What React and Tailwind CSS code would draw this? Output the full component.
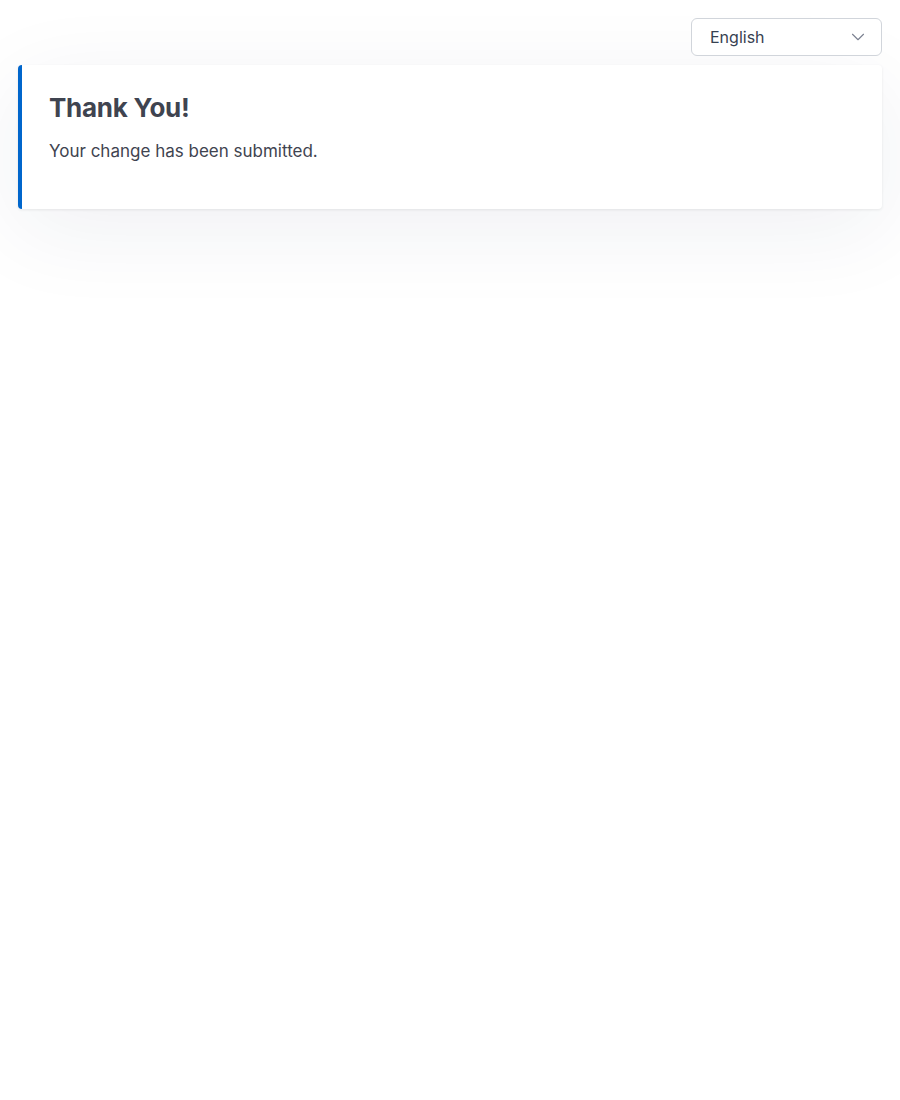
import React from 'react';
import { ChevronDown } from 'lucide-react';

// Thank-you confirmation page
const App = () => {
  return (
    <div
      className="min-h-[1100px] w-full bg-white px-[18px] pt-[18px]"
      style={{ fontFamily: 'Inter, "Noto Sans", sans-serif' }}
    >
      {/* Language selector */}
      <div className="flex justify-end">
        <button className="flex h-[38px] w-[191px] items-center justify-between rounded-[6px] border border-[#d1d5db] bg-white pl-[18px] pr-[12px] text-[16px] text-[#374151]">
          <span>English</span>
          <ChevronDown size={22} strokeWidth={1.2} className="text-[#7b8190]" />
        </button>
      </div>

      {/* Confirmation card */}
      <div className="mt-[9px] h-[144px] rounded-[4px] border-l-4 border-[#0066cc] bg-white pl-[27px] pr-6 pt-[27px] shadow-[0_20px_90px_rgba(30,40,90,0.07),0_1px_3px_rgba(0,0,0,0.08)]">
        <h1 className="text-[26px] font-bold leading-[32px] tracking-[-0.01em] text-[#3f4450]">Thank You!</h1>
        <p className="mt-[15px] text-[17px] leading-[24px] text-[#3f4450]">
          Your change has been submitted.
        </p>
      </div>
    </div>
  );
};

export default App;
